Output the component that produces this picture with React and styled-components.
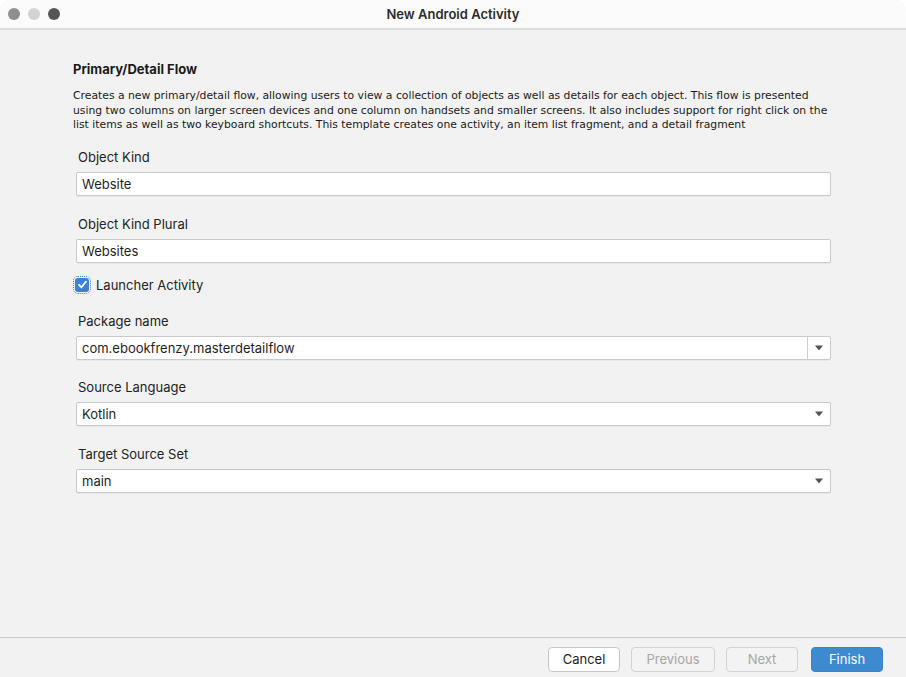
import React from "react";
import styled, { createGlobalStyle } from "styled-components";

const GlobalStyle = createGlobalStyle`
  html, body {
    margin: 0;
    padding: 0;
    background: #ffffff;
  }
  #root {
    height: 677px;
  }
`;

const Window = styled.div`
  height: 677px;
  display: flex;
  flex-direction: column;
  background: #f2f2f2;
  border-radius: 10px 10px 0 0;
  overflow: hidden;
  box-sizing: border-box;
  font-family: Inter, "Liberation Sans", sans-serif;
  color: #1e1e1e;
`;

const TitleBar = styled.div`
  height: 28px;
  flex: none;
  display: flex;
  align-items: center;
  position: relative;
  background: #fbfbfb;
  border-bottom: 2px solid #dcdcdc;
`;

const Lights = styled.div`
  display: flex;
  gap: 8px;
  padding-left: 8px;
`;

const Light = styled.span`
  width: 12px;
  height: 12px;
  border-radius: 50%;
  background: ${({ color }) => color};
`;

const Title = styled.div`
  position: absolute;
  left: 0;
  right: 0;
  text-align: center;
  font-size: 13px;
  font-weight: 600;
  color: #2b2b2b;
  pointer-events: none;
`;

const Content = styled.div`
  flex: 1;
  padding: 31px 60px 0 73px;
`;

const Heading = styled.h1`
  margin: 0;
  font-size: 13px;
  line-height: 16px;
  font-weight: 700;
  color: #1a1a1a;
`;

const Description = styled.p`
  margin: 12px 0 0;
  font-family: "DejaVu Sans", sans-serif;
  font-size: 10.8px;
  line-height: 14.5px;
  color: #1a1a1a;
  white-space: nowrap;
`;

const Fields = styled.div`
  padding-left: 3px;
  margin-top: 16px;
  display: flex;
  flex-direction: column;
`;

const Field = styled.div`
  display: flex;
  flex-direction: column;
  margin-bottom: ${({ $gap }) => $gap}px;
`;

const Label = styled.label`
  font-size: 13px;
  line-height: 16px;
  margin-left: 2px;
  margin-bottom: 7px;
  color: #222;
`;

const Box = styled.div`
  width: 755px;
  height: 24px;
  box-sizing: border-box;
  display: flex;
  align-items: stretch;
  background: #ffffff;
  border: 1px solid #c9c9c9;
  border-radius: 2px;
  box-shadow: 0 1px 0 rgba(0, 0, 0, 0.04);
`;

const Value = styled.span`
  flex: 1;
  display: flex;
  align-items: center;
  padding-left: 5px;
  font-size: 13px;
  color: #1e1e1e;
`;

const ArrowCell = styled.span`
  width: 22px;
  display: flex;
  align-items: center;
  justify-content: center;
  border-left: ${({ $split }) => ($split ? "1px solid #cfcfcf" : "none")};
`;

const CheckRow = styled.div`
  display: flex;
  align-items: center;
  gap: 7px;
  margin: -2px 0 20px -1px;
  font-size: 13px;
  color: #222;
`;

const CheckBox = styled.span`
  width: 14px;
  height: 14px;
  border-radius: 3px;
  background: #3a82d8;
  display: flex;
  align-items: center;
  justify-content: center;
  outline: 1px dotted #4a7fc0;
  outline-offset: 1px;
`;

const Footer = styled.div`
  height: 40px;
  flex: none;
  box-sizing: border-box;
  padding: 3px 23px 0 0;
  border-top: 1px solid #c8c8c8;
  display: flex;
  align-items: center;
  justify-content: flex-end;
  gap: 11px;
`;

const Button = styled.button`
  height: 25px;
  width: ${({ $w }) => $w}px;
  box-sizing: border-box;
  border-radius: 4px;
  font-family: Inter, "Liberation Sans", sans-serif;
  font-size: 13px;
  padding: 0;
  margin-left: ${({ $ml }) => $ml || 0}px;
  border: 1px solid
    ${({ $kind }) =>
      $kind === "primary" ? "#3584cc" : $kind === "disabled" ? "#d3d3d3" : "#c6c6c6"};
  background: ${({ $kind }) =>
    $kind === "primary" ? "#3d8ad0" : $kind === "disabled" ? "#f3f3f3" : "#ffffff"};
  color: ${({ $kind }) =>
    $kind === "primary" ? "#ffffff" : $kind === "disabled" ? "#a6a6a6" : "#1e1e1e"};
`;

const Arrow = () => (
  <svg width="10" height="6" viewBox="0 0 10 6">
    <path d="M1 0.5 H9 L5 5.5 Z" fill="#555" />
  </svg>
);

const Check = () => (
  <svg width="11" height="11" viewBox="0 0 11 11">
    <path
      d="M2 5.8 L4.4 8.3 L9 2.6"
      fill="none"
      stroke="#fff"
      strokeWidth="1.8"
      strokeLinecap="round"
      strokeLinejoin="round"
    />
  </svg>
);

const TextField = ({ label, value, gap = 19 }) => (
  <Field $gap={gap}>
    <Label>{label}</Label>
    <Box>
      <Value>{value}</Value>
    </Box>
  </Field>
);

const SelectField = ({ label, value, split, gap = 19 }) => (
  <Field $gap={gap}>
    <Label>{label}</Label>
    <Box>
      <Value>{value}</Value>
      <ArrowCell $split={split}>
        <Arrow />
      </ArrowCell>
    </Box>
  </Field>
);

export default function App() {
  return (
    <>
      <GlobalStyle />
      <Window>
        <TitleBar>
          <Lights>
            <Light color="#8f8f8f" />
            <Light color="#d3d3d3" />
            <Light color="#555555" />
          </Lights>
          <Title>New Android Activity</Title>
        </TitleBar>
        <Content>
          <Heading>Primary/Detail Flow</Heading>
          <Description>
            Creates a new primary/detail flow, allowing users to view a collection of
            objects as well as details for each object. This flow is presented
            <br />
            using two columns on larger screen devices and one column on handsets and
            smaller screens. It also includes support for right click on the
            <br />
            list items as well as two keyboard shortcuts. This template creates one
            activity, an item list fragment, and a detail fragment
          </Description>
          <Fields>
            <TextField label="Object Kind" value="Website" gap={20} />
            <TextField label="Object Kind Plural" value="Websites" gap={16} />
            <CheckRow>
              <CheckBox>
                <Check />
              </CheckBox>
              Launcher Activity
            </CheckRow>
            <SelectField
              label="Package name"
              value="com.ebookfrenzy.masterdetailflow"
              split
              gap={19}
            />
            <SelectField label="Source Language" value="Kotlin" gap={20} />
            <SelectField label="Target Source Set" value="main" gap={0} />
          </Fields>
        </Content>
        <Footer>
          <Button $w={72}>Cancel</Button>
          <Button $w={84} $kind="disabled">
            Previous
          </Button>
          <Button $w={72} $kind="disabled">
            Next
          </Button>
          <Button $w={72} $kind="primary" $ml={2}>
            Finish
          </Button>
        </Footer>
      </Window>
    </>
  );
}
